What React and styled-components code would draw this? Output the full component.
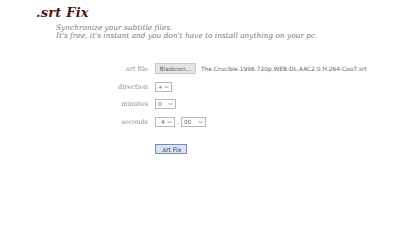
import styled, { createGlobalStyle } from "styled-components";

const GlobalStyle = createGlobalStyle`
    html, body {
        margin: 0;
        padding: 0;
        background: #ffffff;
        -webkit-font-smoothing: antialiased;
    }
`;

const App = () => {
    return(
        <>
            <GlobalStyle />
            <Page>
                <Header>
                    <Title>.srt Fix</Title>
                    <Intro>
                        Synchronize your subtitle files.<br />
                        It's free, it's instant and you don't have to install anything on your pc.
                    </Intro>
                </Header>
                <Form>
                    <Label>.srt file</Label>
                    <Field>
                        <Browse>Bladeren...</Browse>
                        <FileName>The.Crucible.1996.720p.WEB-DL.AAC2.0.H.264-Coo7.srt</FileName>
                    </Field>
                    <Label>direction</Label>
                    <Field>
                        <Select $w={17}>+</Select>
                    </Field>
                    <Label>minutes</Label>
                    <Field>
                        <Select $w={21}>0</Select>
                    </Field>
                    <Label>seconds</Label>
                    <Field>
                        <Select $w={20} $center>4</Select>
                        <Dot>.</Dot>
                        <Select $w={25}>00</Select>
                    </Field>
                    <span />
                    <Field $top={10}>
                        <Submit>.srt Fix</Submit>
                    </Field>
                </Form>
            </Page>
        </>
    );
}

const Chevron = () => (
    <svg width="5" height="4" viewBox="0 0 5 4">
        <path d="M0.6 1 L2.5 3 L4.4 1" fill="none" stroke="#777" strokeWidth="0.7" />
    </svg>
);

const Page = styled.div`
    width: 400px;
    height: 225px;
    font-family: "DejaVu Serif", serif;
`;

const Header = styled.div`
    padding: 5px 0 0 36px;
`;

const Title = styled.h1`
    margin: 0;
    font-size: 13px;
    line-height: 16px;
    font-weight: bold;
    font-style: italic;
    color: #4e1515;
    letter-spacing: 0.2px;
`;

const Intro = styled.p`
    margin: 3px 0 0 20px;
    font-size: 7.4px;
    line-height: 8px;
    font-style: italic;
    color: #7a7a7a;
`;

const Form = styled.div`
    display: grid;
    grid-template-columns: 148px auto;
    grid-template-rows: 11px 10px 10px 10px auto;
    column-gap: 7px;
    row-gap: 7.5px;
    margin-top: 23px;
    align-items: center;
`;

const Label = styled.div`
    text-align: right;
    font-size: 6.6px;
    line-height: 10px;
    color: #8e8e8e;
`;

const Field = styled.div`
    display: flex;
    align-items: center;
    gap: 2px;
    margin-top: ${p => p.$top || 0}px;
`;

const Browse = styled.div`
    width: 41px;
    height: 11px;
    box-sizing: border-box;
    background: #e4e4e4;
    border: 1px solid #c8c8c8;
    font-family: "DejaVu Sans", sans-serif;
    font-size: 5.8px;
    color: #666;
    display: flex;
    align-items: center;
    justify-content: center;
    margin-right: 3px;
`;

const FileName = styled.span`
    font-family: "DejaVu Sans", sans-serif;
    font-size: 5.9px;
    color: #666;
`;

const SelectBox = styled.div`
    width: ${p => p.$w}px;
    height: 10px;
    box-sizing: border-box;
    border: 1px solid #b8b8b8;
    background: #fff;
    font-family: "DejaVu Sans", sans-serif;
    font-size: 5.8px;
    color: #666;
    display: flex;
    align-items: center;
    justify-content: space-between;
    padding: 0 2px 0 ${p => p.$center ? 5 : 2}px;
`;

const Select = ({ children, ...rest }) => (
    <SelectBox {...rest}>
        <span>{children}</span>
        <Chevron />
    </SelectBox>
);

const Dot = styled.span`
    font-family: "DejaVu Sans", sans-serif;
    font-size: 6px;
    color: #555;
`;

const Submit = styled.div`
    width: 32px;
    height: 10px;
    box-sizing: border-box;
    background: #dbe3f3;
    border: 1px solid #7489bb;
    font-family: "DejaVu Sans", sans-serif;
    font-size: 6.2px;
    color: #2a3550;
    display: flex;
    align-items: center;
    justify-content: center;
`;

export default App;
